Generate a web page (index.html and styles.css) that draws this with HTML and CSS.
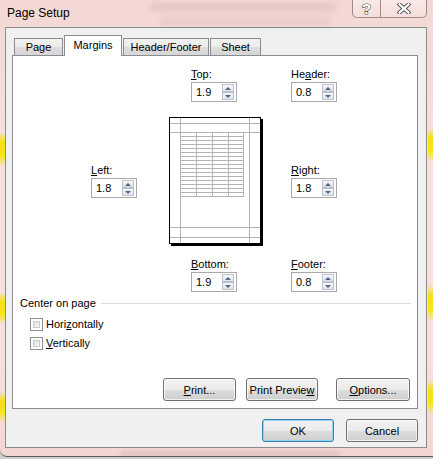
FILE: index.html
```html
<!DOCTYPE html>
<html>
<head>
<meta charset="utf-8">
<title>Page Setup</title>
<link rel="stylesheet" href="styles.css">
</head>
<body>
<div class="window">
  <div class="deco blur1"></div>
  <div class="deco blur2"></div>
  <div class="deco blur3"></div>
  <div class="deco ystrip l1"></div>
  <div class="deco ystrip l2"></div>
  <div class="deco ystrip l3"></div>
  <div class="deco ystrip r1"></div>
  <div class="deco ystrip r2"></div>
  <div class="deco ystrip r3"></div>

  <div class="titlebar">
    <span class="title">Page Setup</span>
    <div class="caption">
      <div class="cap help"><span class="qmark">?</span></div>
      <div class="cap close">
        <svg width="14" height="11" viewBox="0 0 14 11">
          <path d="M2.5 1.5 L11.5 9.5 M11.5 1.5 L2.5 9.5" stroke="#5d5d5d" stroke-width="4.2" stroke-linecap="square" fill="none"/>
          <path d="M2.5 1.5 L11.5 9.5 M11.5 1.5 L2.5 9.5" stroke="#ffffff" stroke-width="2.2" stroke-linecap="square" fill="none"/>
        </svg>
      </div>
    </div>
  </div>

  <div class="client">
    <div class="tabs">
      <div class="tab t-page">Page</div>
      <div class="tab t-margins active">Margins</div>
      <div class="tab t-hf">Header/Footer</div>
      <div class="tab t-sheet">Sheet</div>
    </div>

    <div class="panel">
      <div class="margins">
        <div class="field f-top">
          <div class="lbl"><u>T</u>op:</div>
          <div class="spin"><span class="val">1.9</span><span class="arrows"><span class="ab up"></span><span class="ab down"></span></span></div>
        </div>
        <div class="field f-header">
          <div class="lbl">He<u>a</u>der:</div>
          <div class="spin"><span class="val">0.8</span><span class="arrows"><span class="ab up"></span><span class="ab down"></span></span></div>
        </div>

        <div class="field f-left">
          <div class="lbl"><u>L</u>eft:</div>
          <div class="spin"><span class="val">1.8</span><span class="arrows"><span class="ab up"></span><span class="ab down"></span></span></div>
        </div>
        <div class="page">
          <svg class="sheet" width="90" height="125" viewBox="0 0 90 125" shape-rendering="crispEdges">
            <g stroke="#b4b4b4" stroke-width="1" fill="none">
              <path d="M0 5.5H90M0 14.5H90M0 109.5H90M0 119.5H90"/>
              <path d="M10.5 0V125M79.5 0V125"/>
              <path d="M10.5 18.5H73.5M10.5 22.5H73.5M10.5 26.5H73.5M10.5 30.5H73.5M10.5 34.5H73.5M10.5 38.5H73.5M10.5 42.5H73.5M10.5 46.5H73.5M10.5 50.5H73.5M10.5 54.5H73.5M10.5 58.5H73.5M10.5 62.5H73.5M10.5 66.5H73.5M10.5 70.5H73.5M10.5 74.5H73.5M10.5 78.5H73.5"/>
              <path d="M26.5 14.5V78.5M42.5 14.5V78.5M58.5 14.5V78.5M73.5 14.5V78.5"/>
            </g>
          </svg>
        </div>
        <div class="field f-right">
          <div class="lbl"><u>R</u>ight:</div>
          <div class="spin"><span class="val">1.8</span><span class="arrows"><span class="ab up"></span><span class="ab down"></span></span></div>
        </div>

        <div class="field f-bottom">
          <div class="lbl"><u>B</u>ottom:</div>
          <div class="spin"><span class="val">1.9</span><span class="arrows"><span class="ab up"></span><span class="ab down"></span></span></div>
        </div>
        <div class="field f-footer">
          <div class="lbl"><u>F</u>ooter:</div>
          <div class="spin"><span class="val">0.8</span><span class="arrows"><span class="ab up"></span><span class="ab down"></span></span></div>
        </div>
      </div>

      <div class="group">
        <div class="group-title"><span>Center on page</span><span class="rule"></span></div>
        <div class="checks">
          <div class="check"><span class="box"></span><span>Hori<u>z</u>ontally</span></div>
          <div class="check"><span class="box"></span><span><u>V</u>ertically</span></div>
        </div>
      </div>

      <div class="panel-buttons">
        <button class="btn b-print"><u>P</u>rint...</button>
        <button class="btn b-preview">Print Previe<u>w</u></button>
        <button class="btn b-options"><u>O</u>ptions...</button>
      </div>
    </div>

    <div class="dlg-buttons">
      <button class="btn default">OK</button>
      <button class="btn">Cancel</button>
    </div>
  </div>
</div>
</body>
</html>
```

FILE: styles.css
```css
* { box-sizing: border-box; }

html, body { margin: 0; padding: 0; }

body {
  width: 433px;
  height: 459px;
  overflow: hidden;
  background: #cfcfcf;
  font-family: "Liberation Sans", Arial, sans-serif;
  font-size: 11px;
  color: #000;
}

u { text-decoration: underline; text-underline-offset: 1px; }

.window {
  position: relative;
  width: 433px;
  height: 457px;
  background: linear-gradient(180deg, #f3d8d4 0%, #f7e1de 40%, #f6dfdc 80%, #f3d6d2 100%);
  border-bottom: 1px solid #5a5a5a;
  border-radius: 0 0 0 7px;
  overflow: hidden;
}

.deco { position: absolute; pointer-events: none; }
.blur1 { left: 150px; top: 4px; width: 185px; height: 6px; background: rgba(140, 110, 110, 0.2); filter: blur(3px); }
.blur2 { left: 160px; top: 19px; width: 170px; height: 6px; background: rgba(140, 110, 110, 0.16); filter: blur(3px); }
.blur3 { left: 120px; top: 452px; width: 220px; height: 4px; background: rgba(150, 110, 110, 0.25); filter: blur(2px); }

.ystrip { width: 5px; background: linear-gradient(180deg, rgba(242, 226, 20, 0) 0%, #f2e014 30%, #f5e51a 70%, rgba(242, 226, 20, 0) 100%); filter: blur(0.6px); }
.l1 { left: 0; top: 132px; height: 34px; }
.l2 { left: 0; top: 292px; height: 32px; }
.l3 { left: 0; top: 392px; height: 30px; }
.r1 { right: 0; top: 128px; height: 34px; }
.r2 { right: 0; top: 285px; height: 36px; }
.r3 { right: 0; top: 380px; height: 34px; }

.titlebar {
  position: relative;
  height: 27px;
  display: flex;
}

.title {
  font-size: 12px;
  line-height: 26px;
  padding-left: 7px;
}

.caption {
  position: absolute;
  top: 0;
  right: 6px;
  display: flex;
}

.cap {
  height: 18px;
  border: 1px solid rgba(70, 50, 50, 0.5);
  border-top: none;
  background: linear-gradient(180deg, rgba(255, 255, 255, 0.45), rgba(255, 255, 255, 0.15));
  display: flex;
  align-items: center;
  justify-content: center;
}

.help { width: 28px; border-right: none; border-radius: 0 0 0 5px; }
.close { width: 47px; border-radius: 0 0 5px 0; }

.qmark {
  font-family: "Liberation Sans", Arial, sans-serif;
  font-weight: bold;
  font-size: 15px;
  line-height: 16px;
  color: #ffffff;
  -webkit-text-stroke: 1.2px #5d5d5d;
  paint-order: stroke fill;
}

.client {
  margin-left: 5px;
  width: 422px;
  height: 421px;
  border: 1px solid #8b8b8b;
  background: #f0f0f0;
  display: flex;
  flex-direction: column;
}

.tabs {
  position: relative;
  z-index: 1;
  height: 27px;
  display: flex;
  align-items: flex-end;
  padding-left: 8px;
}

.tab {
  height: 17px;
  border: 1px solid #898c95;
  border-bottom: none;
  background: linear-gradient(180deg, #f3f3f3 0%, #ebebeb 50%, #dedede 51%, #d6d6d6 100%);
  text-align: center;
  line-height: 17px;
  margin-right: 1px;
}

.tab.active {
  height: 21px;
  margin-bottom: -1px;
  background: #fff;
  line-height: 18px;
}

.t-page { width: 49px; }
.t-margins { width: 58px; }
.t-hf { width: 86px; }
.t-sheet { width: 51px; }

.panel {
  margin-left: 6px;
  width: 406px;
  height: 354px;
  border: 1px solid #898c95;
  background: #fff;
  display: flex;
  flex-direction: column;
}

.margins {
  margin-top: 11px;
  margin-left: 78px;
  display: grid;
  grid-template-columns: 78px 122px 48px;
  grid-template-rows: 35px 127px 35px;
  row-gap: 15px;
}

.f-top { grid-column: 2; grid-row: 1; margin-left: 22px; }
.f-header { grid-column: 3; grid-row: 1; }
.f-left { grid-column: 1; grid-row: 2; align-self: center; }
.page { grid-column: 2; grid-row: 2; }
.f-right { grid-column: 3; grid-row: 2; align-self: center; }
.f-bottom { grid-column: 2; grid-row: 3; margin-left: 22px; margin-top: -2px; }
.f-footer { grid-column: 3; grid-row: 3; margin-top: -2px; }

.lbl {
  line-height: 14px;
  margin-bottom: 1px;
  white-space: nowrap;
}

.spin {
  width: 46px;
  height: 20px;
  border: 1px solid #a9a9a9;
  background: #fff;
  display: flex;
  align-items: center;
  padding: 1px 2px 1px 4px;
}

.val { flex: 1; line-height: 16px; }

.arrows {
  width: 12px;
  height: 16px;
  display: flex;
  flex-direction: column;
}

.ab {
  flex: 1;
  border: 1px solid #bcc3ce;
  background: linear-gradient(180deg, #f6f7f9, #dfe4ea);
  display: flex;
  align-items: center;
  justify-content: center;
}

.up::after, .down::after {
  content: "";
  width: 0;
  height: 0;
  border-left: 3px solid transparent;
  border-right: 3px solid transparent;
}
.up::after { border-bottom: 3px solid #51658a; }
.down::after { border-top: 3px solid #51658a; }

.page {
  width: 92px;
  height: 127px;
  border: 1px solid #000;
  background: #fff;
  box-shadow: 2px 2px 0 #000;
}

.sheet { display: block; }

.group {
  margin-top: 3px;
  padding: 0 6px 0 7px;
}

.group-title {
  display: flex;
  align-items: center;
  line-height: 13px;
}

.rule {
  flex: 1;
  height: 1px;
  margin-left: 5px;
  background: #d5dfe5;
}

.checks {
  margin-top: 5px;
  padding-left: 10px;
}

.check {
  display: flex;
  align-items: center;
  height: 19px;
  line-height: 19px;
}

.box {
  width: 13px;
  height: 13px;
  border: 1px solid #8e8f8f;
  background: #fff;
  margin-right: 3px;
  padding: 2px;
  display: flex;
}

.box::after {
  content: "";
  flex: 1;
  border: 1px solid #c9cdd2;
  background: linear-gradient(135deg, #d9dde2, #f6f6f6);
}

.panel-buttons {
  margin-top: auto;
  padding: 0 7px 7px 0;
  display: flex;
  justify-content: flex-end;
}

.btn {
  height: 23px;
  border: 1px solid #707070;
  border-radius: 3px;
  background: linear-gradient(180deg, #f2f2f2 0%, #ebebeb 50%, #dddddd 51%, #cfcfcf 100%);
  box-shadow: inset 0 0 0 1px rgba(255, 255, 255, 0.7);
  font-family: "Liberation Sans", Arial, sans-serif;
  font-size: 11px;
  color: #000;
  padding: 0;
  margin: 0;
  width: 72px;
}

.b-print { width: 73px; }
.b-preview { width: 72px; margin-left: 10px; }
.b-options { width: 74px; margin-left: 18px; }

.dlg-buttons {
  margin-top: 10px;
  padding-right: 8px;
  display: flex;
  justify-content: flex-end;
  gap: 12px;
}

.btn.default {
  border-color: #3c7fb1;
  box-shadow: inset 0 0 0 1px #8fd6f5;
}
```
